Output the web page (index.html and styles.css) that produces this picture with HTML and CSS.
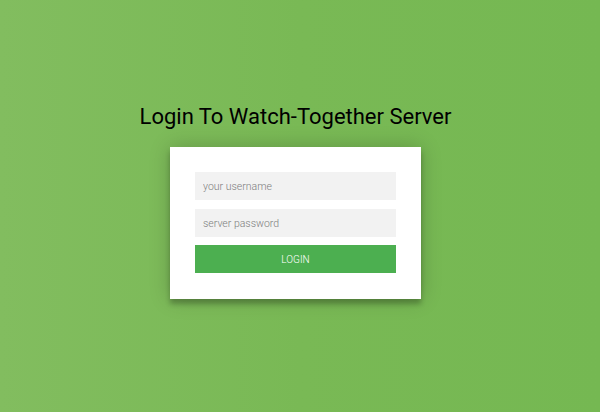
FILE: index.html
```html
<!DOCTYPE html>
<html>
<head>
<meta charset="utf-8">
<link rel="stylesheet" href="styles.css">
</head>
<body>
<main class="page">
  <h1 class="title">Login To Watch-Together Server</h1>
  <form class="card">
    <input class="field" type="text" placeholder="your username">
    <input class="field" type="password" placeholder="server password">
    <button class="btn" type="button">login</button>
  </form>
</main>
</body>
</html>
```
FILE: styles.css
```css
html, body {
  margin: 0;
  height: 100%;
}
body {
  background: linear-gradient(to right, #82bd5f 0%, #79b955 50%, #75b852 100%);
  font-family: Roboto, "Liberation Sans", sans-serif;
}
.page {
  display: flex;
  flex-direction: column;
  align-items: center;
  padding: 104px 9px 0 0;
}
.title {
  margin: 0 0 17px;
  font-size: 22px;
  font-weight: 400;
  line-height: 26px;
  color: #000;
}
.card {
  width: 201px;
  padding: 25px 25px 26px;
  background: #fff;
  box-shadow: 0 0 20px 0 rgba(0,0,0,0.2), 0 5px 5px 0 rgba(0,0,0,0.24);
  display: flex;
  flex-direction: column;
}
.field {
  box-sizing: border-box;
  width: 100%;
  height: 28px;
  margin: 0 0 9px;
  padding: 0 8px;
  border: 0;
  outline: 0;
  background: #f2f2f2;
  font-family: Roboto, "Liberation Sans", sans-serif;
  font-size: 10.5px;
  font-weight: 300;
  color: #333;
}
.field + .field {
  margin-bottom: 8px;
}
.field::placeholder {
  color: #7d7d7d;
}
.btn {
  height: 28px;
  border: 0;
  background: #4caf50;
  color: #fff;
  font-family: Roboto, "Liberation Sans", sans-serif;
  font-size: 10px;
  font-weight: 300;
  text-transform: uppercase;
  cursor: pointer;
}
```
